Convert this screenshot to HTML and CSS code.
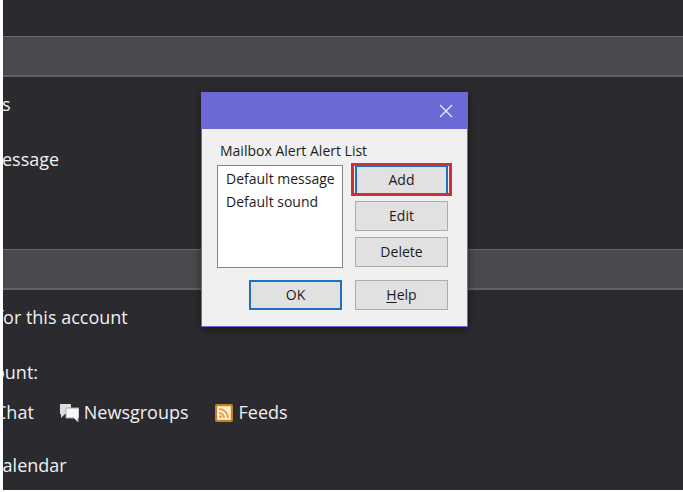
FILE: index.html
```html
<!DOCTYPE html>
<html lang="en">
<head>
  <meta charset="UTF-8">
  <meta name="viewport" content="width=device-width, initial-scale=1.0">
  <title>Mailbox Alert</title>
  <link rel="stylesheet" href="styles.css">
</head>
<body>

  <main class="settings">
    <div class="band band-first"></div>
    <p class="row">s</p>
    <p class="row">essage</p>

    <div class="band band-second"></div>
    <p class="row row-cut">for this account</p>
    <p class="row row-wide-cut">ount:</p>

    <div class="accounts">
      <span class="account chat">Chat</span>
      <span class="account">
        <svg class="icon" viewBox="0 0 20 20" aria-hidden="true">
          <path d="M1 2h11v10H6l-4 4v-4H1z" fill="#dededf"/>
          <path d="M7 6h13v10h-1v4l-4-4H7z" fill="#f7f7f7" stroke="#a9a9ad" stroke-width="1"/>
        </svg>
        Newsgroups
      </span>
      <span class="account">
        <svg class="icon" viewBox="0 0 20 20" aria-hidden="true">
          <rect x="2" y="3" width="16" height="16" rx="1" fill="#fbd9a5" stroke="#c98025" stroke-width="2"/>
          <rect x="4" y="5" width="12" height="12" fill="#fff1d8"/>
          <g fill="none" stroke="#eb9a45" stroke-width="2">
            <path d="M5 7a9 9 0 0 1 9 9"/>
            <path d="M5 11a5 5 0 0 1 5 5"/>
          </g>
          <circle cx="6.500" cy="14.500" r="1.500" fill="#eb9a45"/>
        </svg>
        Feeds
      </span>
    </div>

    <p class="row row-wide-cut">calendar</p>
  </main>

  <div class="dialog" role="dialog" aria-labelledby="list-label">
    <div class="titlebar">
      <button class="close" type="button" aria-label="Close">
        <svg viewBox="0 0 14 14" aria-hidden="true">
          <path d="M1 1l12 12M13 1L1 13" fill="none" stroke="#ececfa" stroke-width="1.300"/>
        </svg>
      </button>
    </div>

    <form class="content">
      <label class="list-label" id="list-label" for="alerts">Mailbox Alert Alert List</label>
      <div class="columns">
        <select class="alerts" id="alerts" size="4">
          <option>Default message</option>
          <option>Default sound</option>
        </select>
        <div class="actions">
          <button class="btn btn-add" type="button">Add</button>
          <button class="btn" type="button">Edit</button>
          <button class="btn" type="button">Delete</button>
        </div>
      </div>
      <div class="footer">
        <button class="btn btn-default" type="button">OK</button>
        <button class="btn" type="button"><u>H</u>elp</button>
      </div>
    </form>
  </div>

</body>
</html>
```

FILE: styles.css
```css
* {
  box-sizing: border-box;
}

body {
  margin: 0;
  padding: 0 0 2px 3px;
  height: 100vh;
  display: flex;
  background: #fff;
  font-family: "Open Sans", "Noto Sans", sans-serif;
  overflow: hidden;
}

/* Settings page behind the dialog */
.settings {
  flex: 1;
  overflow: hidden;
  background: #2b2a2e;
  color: #f0f0f1;
  font-size: 18px;
}

.band {
  height: 41px;
  background: #4a494d;
  border-top: 1px solid #69686c;
  border-bottom: 2px solid #626165;
}

.band-first {
  margin-top: 36px;
}

.band-second {
  margin-top: 62px;
}

.row {
  margin: 0 0 0 -1px;
  line-height: 55px;
  white-space: nowrap;
}

.row-cut {
  margin-left: -6px;
}

.row-wide-cut {
  margin-left: -9px;
}

.accounts {
  display: flex;
  gap: 25px;
  margin-bottom: 14px;
  line-height: 24px;
}

.account {
  display: flex;
  align-items: center;
  gap: 5px;
}

.chat {
  margin-left: -8px;
}

.icon {
  width: 20px;
  height: 20px;
}

/* Dialog */
.dialog {
  position: absolute;
  top: 92px;
  left: 201px;
  width: 267px;
  background: #f0f0f0;
  border: 1px solid #6a67d2;
  box-shadow: 0 2px 8px rgba(0, 0, 0, 0.5);
  color: #1c1c1c;
  font-size: 14px;
}

.titlebar {
  display: flex;
  justify-content: flex-end;
  align-items: center;
  height: 36px;
  padding-right: 14px;
  background: #6b69d6;
}

.close {
  display: flex;
  padding: 0;
  border: 0;
  background: none;
}

.close svg {
  width: 14px;
  height: 14px;
}

.content {
  padding: 12px 19px 16px 15px;
}

.list-label {
  display: block;
  padding-left: 3px;
  line-height: 20px;
}

.columns {
  display: flex;
  gap: 12px;
  margin-top: 4px;
}

.alerts {
  flex: 1;
  min-width: 0;
  height: 103px;
  padding: 3px 0;
  border: 1px solid #83838a;
  border-radius: 0;
  background: #fff;
  color: inherit;
  font: inherit;
  overflow: hidden;
  outline: none;
}

.alerts option {
  min-height: 23px;
  padding: 0 0 0 8px;
  line-height: 23px;
}

.actions {
  display: flex;
  flex-direction: column;
  gap: 6px;
}

.btn {
  width: 93px;
  height: 30px;
  padding: 0 0 2px;
  border: 1px solid #adadad;
  border-radius: 0;
  background: #e1e1e1;
  color: inherit;
  font: inherit;
}

.btn u {
  text-underline-offset: 2px;
}

.btn-add,
.btn-default {
  border: 2px solid #1f71bf;
}

/* Red highlight around the Add button */
.btn-add {
  position: relative;
}

.btn-add::after {
  content: "";
  position: absolute;
  top: -4px;
  right: -6px;
  bottom: -3px;
  left: -6px;
  border: 3px solid #d13037;
}

.footer {
  display: flex;
  justify-content: flex-end;
  gap: 13px;
  margin-top: 12px;
}
```
